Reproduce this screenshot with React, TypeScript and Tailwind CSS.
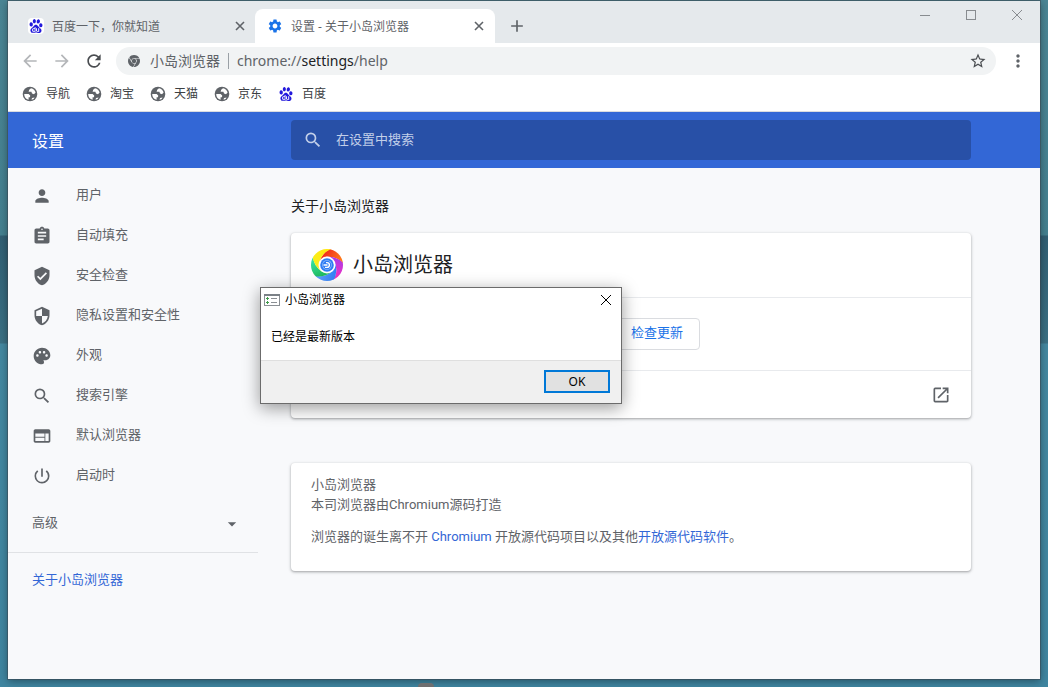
import type { ReactNode } from 'react'
import type { IconType } from 'react-icons'
import {
  MdAdd,
  MdArrowBack,
  MdArrowDropDown,
  MdArrowForward,
  MdAssignment,
  MdMoreVert,
  MdOpenInNew,
  MdPalette,
  MdPerson,
  MdPowerSettingsNew,
  MdRefresh,
  MdSearch,
  MdSecurity,
  MdSettings,
  MdStarBorder,
  MdVerifiedUser,
  MdWeb,
} from 'react-icons/md'
import { SiBaidu, SiGooglechrome } from 'react-icons/si'

const navItems: { label: string; icon: IconType }[] = [
  { label: '用户', icon: MdPerson },
  { label: '自动填充', icon: MdAssignment },
  { label: '安全检查', icon: MdVerifiedUser },
  { label: '隐私设置和安全性', icon: MdSecurity },
  { label: '外观', icon: MdPalette },
  { label: '搜索引擎', icon: MdSearch },
  { label: '默认浏览器', icon: MdWeb },
  { label: '启动时', icon: MdPowerSettingsNew },
]

const bookmarks = ['导航', '淘宝', '天猫', '京东']

// clockwise from the top
const blades = [
  ['#f0281c', '#ff7a1a'],
  ['#a93be8', '#f02fc0'],
  ['#2f7df4', '#5a9cff'],
  ['#1fb85a', '#35e0a0'],
  ['#f9ee1c', '#ffe812'],
]

// Five curved blades around a white ring with a blue disc in it
function IslandLogo() {
  return (
    <svg viewBox="0 0 32 32" className="size-8" aria-hidden="true">
      <defs>
        <clipPath id="disc">
          <circle cx="16" cy="16" r="16" />
        </clipPath>
        {blades.map(([from, to], i) => (
          <linearGradient key={from} id={`blade-${i}`} x1="0" y1="0.2" x2="1" y2="0.6">
            <stop offset="0.2" stopColor={from} />
            <stop offset="0.9" stopColor={to} />
          </linearGradient>
        ))}
      </defs>
      <g clipPath="url(#disc)">
        {blades.map(([from], i) => (
          <path
            key={from}
            d="M8 14Q11 3 21-1L34-2L33 16Q27 7 15.4 7.8Z"
            fill={`url(#blade-${i})`}
            transform={`rotate(${i * 72} 16 16)`}
          />
        ))}
      </g>
      <circle cx="16" cy="16" r="8.5" fill="#fff" />
      <circle cx="16" cy="16" r="6.8" fill="#2f7df4" />
      <circle cx="16" cy="16" r="4.8" fill="#9cc3fb" />
      <circle cx="16" cy="16" r="4.2" fill="#2f7df4" />
      <path d="M12.5 16h4M15 13.6h1a2.4 2.4 0 0 1 0 4.8H14" fill="none" stroke="#fff" strokeWidth="1.4" />
    </svg>
  )
}

function GlobeIcon() {
  return (
    <svg viewBox="0 0 16 16" className="size-4" aria-hidden="true">
      <circle cx="8" cy="8" r="7.3" fill="#5f6368" />
      <path d="M9 2.2L7.2 3.8L6.6 5.8H9.4L10 7.6L12 8.2L13.6 6.6A6 6 0 0 0 9 2.2Z" fill="#fff" />
      <path d="M2.2 8H6.6L8.2 9.4L8 11.2H6.6V13.8A6 6 0 0 1 2.2 8Z" fill="#fff" />
      <path d="M9.6 13.8L10 12L12.6 11.4L11.6 13Z" fill="#fff" />
    </svg>
  )
}

function TabCloseIcon() {
  return (
    <svg viewBox="0 0 10 10" className="size-2.5" stroke="#5f6368" strokeWidth="1.6" aria-hidden="true">
      <path d="M1 1l8 8M9 1L1 9" />
    </svg>
  )
}

function DialogIcon() {
  return (
    <svg viewBox="0 0 16 12" className="h-3 w-4" aria-hidden="true">
      <rect x="0.5" y="0.5" width="15" height="11" fill="#fff" stroke="#8a8f94" />
      <path d="M0 1h16" stroke="#7b8187" strokeWidth="2" />
      <path d="M2 4.5h3M2 8.5h3M3.5 3v3M3.5 7v3" stroke="#3f9b4a" />
      <path d="M7 4.5h6M7 8.5h6" stroke="#8a8f94" />
    </svg>
  )
}

function Card({ children }: { children: ReactNode }) {
  return (
    <section className="rounded bg-white shadow-[0_1px_2px_rgba(60,64,67,0.3),0_1px_3px_1px_rgba(60,64,67,0.15)]">
      {children}
    </section>
  )
}

function TabStrip() {
  return (
    <div className="flex h-[42px] items-end bg-[#e5e9ec] text-xs text-[#5f6368]">
      <div className="flex h-[34px] w-[247px] items-center pr-2.5 pl-5">
        <span className="mr-2 rounded-sm bg-white p-px">
          <SiBaidu className="size-3.5 text-[#2319dc]" />
        </span>
        <span className="flex-1 pt-0.5">百度一下，你就知道</span>
        <button aria-label="关闭标签页">
          <TabCloseIcon />
        </button>
      </div>
      <div className="flex h-[34px] w-60 items-center rounded-t-lg bg-white pr-[11px] pl-3">
        <MdSettings className="mr-2 size-4 text-[#1a73e8]" />
        <span className="flex-1 pt-0.5">设置 - 关于小岛浏览器</span>
        <button aria-label="关闭标签页">
          <TabCloseIcon />
        </button>
      </div>
      <button aria-label="新标签页" className="ml-3 flex h-[34px] items-center">
        <MdAdd className="size-5" />
      </button>
      <div className="ml-auto flex h-full items-start gap-9 pt-[9px] pr-[18px]">
        <button aria-label="最小化">
          <svg viewBox="0 0 10 10" className="size-2.5" stroke="#888c90">
            <path d="M0 5.5h10" />
          </svg>
        </button>
        <button aria-label="最大化">
          <svg viewBox="0 0 10 10" className="size-2.5" fill="none" stroke="#888c90">
            <rect x="0.5" y="0.5" width="9" height="9" />
          </svg>
        </button>
        <button aria-label="关闭">
          <svg viewBox="0 0 10 10" className="size-2.5" stroke="#888c90">
            <path d="M0 0l10 10M10 0L0 10" />
          </svg>
        </button>
      </div>
    </div>
  )
}

function Toolbar() {
  return (
    <div className="flex h-9 items-center bg-white px-3 text-[#5f6368]">
      <div className="flex w-24 items-center gap-3">
        <button aria-label="后退" className="text-[#b4b6b9]">
          <MdArrowBack className="size-5" />
        </button>
        <button aria-label="前进" className="text-[#b4b6b9]">
          <MdArrowForward className="size-5" />
        </button>
        <button aria-label="重新加载" className="text-[#4a4d51]">
          <MdRefresh className="size-5" />
        </button>
      </div>
      <div className="flex h-7 flex-1 items-center rounded-full bg-[#f1f3f4] pr-[9px] pl-3 text-sm">
        <SiGooglechrome className="mr-2.5 size-3" />
        <span>小岛浏览器</span>
        <span className="mx-2 h-4 w-px bg-[#9aa0a6]" />
        <span className="flex-1">
          chrome://<span className="text-[#202124]">settings</span>/help
        </span>
        <button aria-label="为此页添加书签" className="text-[#4a4d51]">
          <MdStarBorder className="size-[18px]" />
        </button>
      </div>
      <button aria-label="菜单" className="ml-3">
        <MdMoreVert className="size-5" />
      </button>
    </div>
  )
}

function BookmarksBar() {
  return (
    <div className="flex h-[33px] items-center gap-4 border-b border-[#dadce0] bg-white pb-0.5 pl-3.5 text-xs text-[#3c4043]">
      {bookmarks.map((name) => (
        <a key={name} href="#" className="flex items-center gap-2">
          <GlobeIcon />
          {name}
        </a>
      ))}
      <a href="#" className="flex items-center gap-2">
        <span className="p-px">
          <SiBaidu className="size-3.5 text-[#2319dc]" />
        </span>
        百度
      </a>
    </div>
  )
}

function Sidebar() {
  return (
    <nav className="w-[250px] shrink-0 pt-2 text-[#5f6368]">
      {navItems.map(({ label, icon: Icon }) => (
        <a key={label} href="#" className="flex h-10 items-center gap-6 pl-6">
          <Icon className="size-5" />
          <span className="pb-0.5">{label}</span>
        </a>
      ))}
      <button className="mt-1 flex h-12 w-full items-center justify-between pr-4 pl-6">
        <span className="pb-0.5">高级</span>
        <MdArrowDropDown className="size-5" />
      </button>
      <div className="mt-1 border-t border-[#e0e2e5] pt-2">
        <a href="#" className="flex h-10 items-center pb-0.5 pl-6 text-[#3367d6]">
          关于小岛浏览器
        </a>
      </div>
    </nav>
  )
}

function UpdateDialog() {
  return (
    <div
      role="dialog"
      aria-labelledby="dialog-title"
      className="absolute top-[287px] left-[260px] w-[362px] border border-[#6b6b6b] bg-white text-xs text-black shadow-[0_4px_16px_rgba(0,0,0,0.4)]"
    >
      <div className="flex h-6 items-center gap-[5px] pr-2.5 pl-[3px]">
        <DialogIcon />
        <h2 id="dialog-title" className="flex-1">
          小岛浏览器
        </h2>
        <button aria-label="关闭">
          <svg viewBox="0 0 10 10" className="size-2.5" stroke="#000">
            <path d="M0 0l10 10M10 0L0 10" />
          </svg>
        </button>
      </div>
      <p className="flex h-12 items-center px-2.5 pt-0.5">已经是最新版本</p>
      <div className="flex h-[43px] items-start justify-end border-t border-[#dfdfdf] bg-[#f0f0f0] pt-[9px] pr-[11px]">
        <button className="h-[23px] w-[66px] border-2 border-[#0078d7] bg-[#e1e1e1] leading-5">OK</button>
      </div>
    </div>
  )
}

export default function App() {
  return (
    <div className="relative min-h-screen bg-[linear-gradient(#4a8594_0,#44808f_235px,#315f73_236px,#3b7083_343px,#4488a0_344px,#3f85a0_100%)] px-2 pt-px pb-2 font-['Noto_Sans','Noto_Sans_CJK_SC',sans-serif]">
      <div className="flex min-h-[calc(100vh-9px)] flex-col bg-[#f8f9fb] shadow-[0_0_0_1px_rgba(60,70,80,0.5),0_2px_8px_rgba(0,0,0,0.4)]">
        <TabStrip />
        <Toolbar />
        <BookmarksBar />
        <div className="font-[family-name:Roboto,'Noto_Sans_CJK_SC',sans-serif] text-[13px] leading-5">
          <header className="flex h-14 items-center bg-[#3367d6] pr-[69px] text-white">
            <h1 className="w-[283px] pt-1 pl-6 text-base">设置</h1>
            <label className="flex h-10 flex-1 items-center gap-[13px] rounded-sm bg-[#2850a7] px-3 text-[#c2cfe9]">
              <MdSearch className="size-5" />
              <input
                type="search"
                aria-label="在设置中搜索"
                placeholder="在设置中搜索"
                className="flex-1 bg-transparent outline-none placeholder:text-[#c2cfe9]"
              />
            </label>
          </header>
          <div className="flex">
            <Sidebar />
            <main className="flex-1 pt-7 pr-[69px] pl-[33px] text-[#5f6368]">
              <h2 className="mb-[17px] text-sm leading-5 text-[#202124]">关于小岛浏览器</h2>
              <Card>
                <div className="flex h-16 items-center gap-2.5 px-5 text-xl text-[#202124]">
                  <IslandLogo />
                  小岛浏览器
                </div>
                <div className="flex h-[73px] items-center border-t border-[#e8eaed] px-5">
                  <button className="ml-[303px] h-8 rounded border border-[#dadce0] px-4 pb-0.5 text-[#1a73e8]">
                    检查更新
                  </button>
                </div>
                <div className="flex h-12 items-center justify-end border-t border-[#e8eaed] px-5">
                  <a href="#" aria-label="获取帮助">
                    <MdOpenInNew className="size-5" />
                  </a>
                </div>
              </Card>
              <div className="mt-[45px]">
                <Card>
                  <div className="px-5 pt-3 pb-6">
                    <p>小岛浏览器</p>
                    <p>本司浏览器由Chromium源码打造</p>
                    <p className="mt-3">
                      浏览器的诞生离不开{' '}
                      <a href="#" className="text-[#3367d6]">
                        Chromium
                      </a>{' '}
                      开放源代码项目以及其他
                      <a href="#" className="text-[#3367d6]">
                        开放源代码软件
                      </a>
                      。
                    </p>
                  </div>
                </Card>
              </div>
            </main>
          </div>
        </div>
      </div>
      {/* tip of a rock in the wallpaper */}
      <div className="absolute bottom-0 left-[418px] h-1 w-4 rounded-t-full bg-[#6f6f70]" />
      <UpdateDialog />
    </div>
  )
}
